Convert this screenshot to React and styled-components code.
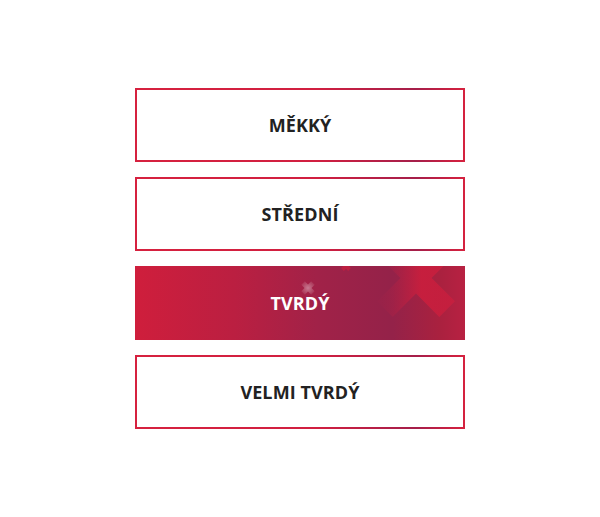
import React, { useState } from "react";
import styled, { createGlobalStyle, css } from "styled-components";

const GlobalStyle = createGlobalStyle`
  html, body {
    margin: 0;
    padding: 0;
    background: #ffffff;
  }
  body {
    font-family: "Open Sans", "Noto Sans", "Liberation Sans", sans-serif;
  }
`;

const Page = styled.div`
  width: 600px;
  height: 517px;
  display: flex;
  justify-content: center;
  padding-top: 88px;
  box-sizing: border-box;
`;

const List = styled.div`
  width: 330px;
  display: flex;
  flex-direction: column;
  gap: 15px;
`;

const Option = styled.button`
  position: relative;
  overflow: hidden;
  height: 74px;
  width: 100%;
  margin: 0;
  padding: 0;
  box-sizing: border-box;
  display: flex;
  align-items: center;
  justify-content: center;
  font-family: "Open Sans", "Noto Sans", sans-serif;
  font-size: 18px;
  font-weight: 700;
  letter-spacing: 0.1px;
  cursor: pointer;
  border: 2px solid transparent;
  color: #222222;
  background:
    linear-gradient(#ffffff, #ffffff) padding-box,
    linear-gradient(
        to right,
        #d6213f 0%,
        #d11f40 55%,
        #a51f4a 85%,
        #c51f42 94%,
        #d5223f 100%
      )
      border-box;

  ${(p) =>
    p.$active &&
    css`
      border: none;
      color: #ffffff;
      background: linear-gradient(
        to right,
        #cf1e3c 0%,
        #bb1f41 30%,
        #a12248 55%,
        #942249 78%,
        #a9213f 92%,
        #b82142 100%
      );
    `}
`;

const Label = styled.span`
  position: relative;
  z-index: 1;
`;

const Decor = styled.svg`
  position: absolute;
  inset: 0;
  width: 100%;
  height: 100%;
  pointer-events: none;
`;

/* points of a cross turned 45°, centred on (cx, cy) */
function crossPoints(cx, cy, len, half) {
  const plus = [
    [-half, -len], [half, -len], [half, -half], [len, -half],
    [len, half], [half, half], [half, len], [-half, len],
    [-half, half], [-len, half], [-len, -half], [-half, -half],
  ];
  const s = Math.SQRT1_2;
  return plus
    .map(([x, y]) => `${(cx + (x - y) * s).toFixed(2)},${(cy + (x + y) * s).toFixed(2)}`)
    .join(" ");
}

/* diagonal crosses layered over the selected option */
function Crosses() {
  return (
    <Decor viewBox="0 0 330 74" preserveAspectRatio="none">
      <defs>
        <linearGradient id="bigX" gradientUnits="userSpaceOnUse" x1="245" y1="0" x2="320" y2="0">
          <stop offset="0" stopColor="#a52248" stopOpacity="0.15" />
          <stop offset="0.55" stopColor="#cd1e3d" stopOpacity="0.85" />
          <stop offset="1" stopColor="#cc1e3e" stopOpacity="0.7" />
        </linearGradient>
        <radialGradient id="smallX" gradientUnits="userSpaceOnUse" cx="173" cy="22" r="8">
          <stop offset="0" stopColor="#ffffff" stopOpacity="0.4" />
          <stop offset="1" stopColor="#ffffff" stopOpacity="0.05" />
        </radialGradient>
      </defs>
      <polygon points={crossPoints(281, 12, 44, 11)} fill="url(#bigX)" />
      <polygon points={crossPoints(173, 22, 7, 2.5)} fill="url(#smallX)" />
      <polygon points={crossPoints(211, 0, 5, 2)} fill="#c51f40" opacity="0.8" />
    </Decor>
  );
}

const options = ["MĚKKÝ", "STŘEDNÍ", "TVRDÝ", "VELMI TVRDÝ"];

export default function App() {
  const [selected, setSelected] = useState(2);
  return (
    <>
      <GlobalStyle />
      <Page>
        <List>
          {options.map((label, i) => (
            <Option
              key={label}
              type="button"
              $active={i === selected}
              onClick={() => setSelected(i)}
            >
              {i === selected && <Crosses />}
              <Label>{label}</Label>
            </Option>
          ))}
        </List>
      </Page>
    </>
  );
}
